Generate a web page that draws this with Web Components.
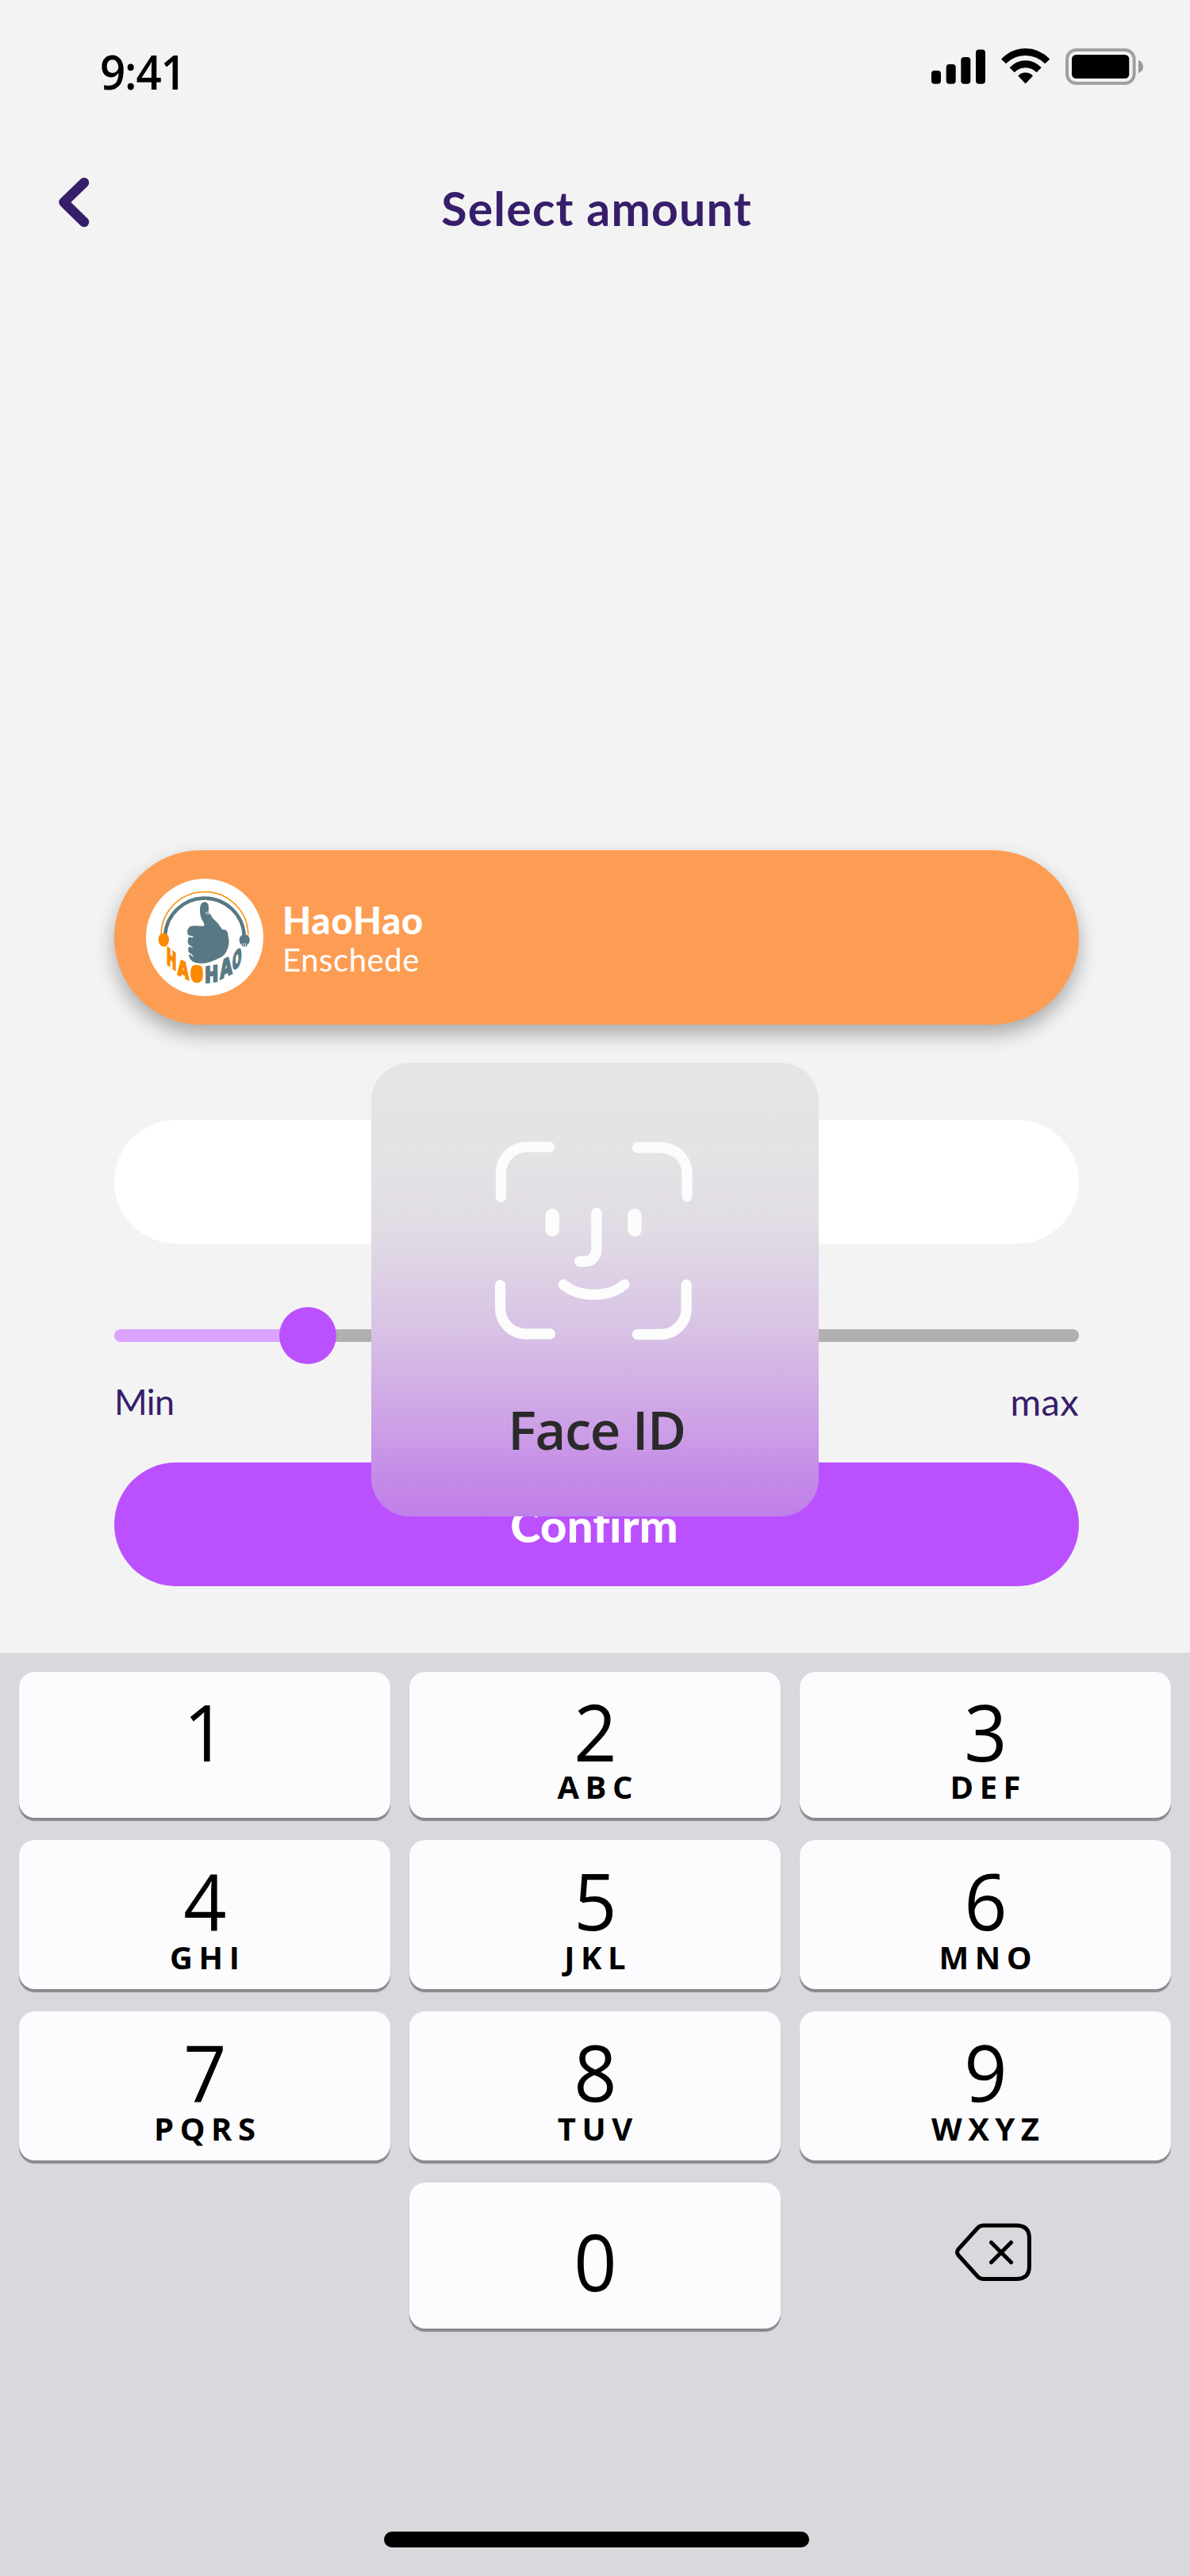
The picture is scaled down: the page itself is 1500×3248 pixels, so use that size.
<!DOCTYPE html>
<html lang="en">
<head>
<meta charset="utf-8">
<title>Select amount</title>
<style>
  html, body { margin: 0; padding: 0; }
  body { width: 1500px; background: #f3f3f3; font-family: "Open Sans", "Noto Sans", sans-serif; color: #000; }
</style>
</head>
<body>
<phone-screen>
  <status-bar time="9:41"></status-bar>
  <nav-header>Select amount</nav-header>
  <amount-form>
    <merchant-card name="HaoHao" place="Enschede"></merchant-card>
    <amount-field></amount-field>
    <range-slider></range-slider>
    <pill-button>Confirm</pill-button>
  </amount-form>
  <number-pad></number-pad>
  <face-id-panel slot="overlay">Face ID</face-id-panel>
</phone-screen>
<script>
const define = (name, html, setup) => customElements.define(name, class extends HTMLElement {
  connectedCallback() {
    if (this.shadowRoot) return;
    const root = this.attachShadow({ mode: "open" });
    const tpl = document.createElement("template");
    tpl.innerHTML = html;
    root.append(tpl.content.cloneNode(true));
    if (setup) setup(this, root);
  }
});

define("phone-screen", `
  <style>
    :host { display: flex; flex-direction: column; position: relative; width: 1500px; height: 3248px; background: #f3f3f3; overflow: hidden; }
  </style>
  <slot></slot><slot name="overlay"></slot>`);

define("status-bar", `
  <style>
    :host { display: flex; justify-content: space-between; align-items: flex-start; height: 180px; box-sizing: border-box; padding: 56px 58px 0 126px; }
    .time { font-size: 60px; font-weight: 600; line-height: 68px; letter-spacing: -1.200px; transform: scaleX(.94); transform-origin: left; }
    svg { display: block; }
  </style>
  <span class="time"></span>
  <svg width="270" height="54" viewBox="1172 56 270 54">
    <rect x="1174" y="89" width="12" height="16.7" rx="4"/>
    <rect x="1192.7" y="81" width="12" height="24.7" rx="4"/>
    <rect x="1211.3" y="72" width="12" height="33.7" rx="4"/>
    <rect x="1230" y="62.5" width="12" height="43.2" rx="4"/>
    <path d="M1262 74.5 Q1275 61 1292.600 61 Q1310 61 1323.300 74.500 L1317.300 80.300 Q1306.500 70 1292.600 70 Q1278.700 70 1268 80.300 Z"/>
    <path d="M1272.600 85.200 Q1281 76.200 1292.600 76.200 Q1304.200 76.200 1312.700 85.200 L1306.600 91.300 Q1300.500 85.300 1292.600 85.300 Q1284.700 85.300 1278.700 91.300 Z"/>
    <path d="M1283.300 95.700 Q1287 91.500 1292.600 91.500 Q1298.200 91.500 1302 95.700 L1292.600 105.400 Z"/>
    <rect x="1345" y="63" width="84.600" height="42" rx="11.500" fill="none" stroke="#a0a0a0" stroke-width="4"/>
    <rect x="1351" y="69" width="72.300" height="30" rx="5.500"/>
    <path d="M1435 75.700 Q1441 78.500 1441 84 Q1441 89.500 1435 92.300 Z" fill="#999"/>
  </svg>`, (el, root) => { root.querySelector(".time").textContent = el.getAttribute("time"); });

define("nav-header", `
  <style>
    :host { display: grid; grid-template-columns: 1fr auto 1fr; align-items: center; height: 150px; box-sizing: border-box; padding: 0 68px 0 72px; color: #371e6b; }
    h1 { margin: 0; padding-top: 16px; font: 700 59px/60px Lato, sans-serif; letter-spacing: 1.2px; }
    svg { display: block; }
  </style>
  <svg width="42" height="64" viewBox="72 223 42 64"><path d="M106 230.200 L80.500 255 L106 280" fill="none" stroke="currentColor" stroke-width="12.500" stroke-linecap="round" stroke-linejoin="round"/></svg>
  <h1><slot></slot></h1>`);

define("amount-form", `
  <style>
    :host { display: flex; flex-direction: column; height: 1754px; box-sizing: border-box; padding: 742px 140px 0 144px; }
  </style><slot></slot>`);

define("hao-logo", `
  <style>:host { display: block; width: 148px; height: 148px; flex: none; } svg { display: block; }</style>
  <svg width="148" height="148" viewBox="42 54 444 444" font-family="Open Sans, sans-serif" font-weight="800" font-size="100">
    <circle cx="264" cy="276" r="222" fill="#fff"/>
    <g fill="none">
      <path d="M99.500 268 A164.500 164.500 0 0 1 428.500 268" stroke="#fb8a00" stroke-width="4.500"/>
      <path d="M114.500 266 A149.800 149.800 0 0 1 413.500 270" stroke="#587983" stroke-width="13.500"/>
    </g>
    <path d="M109 260 C122 260 129 270 129 284 C129 299 119 311 110 311 C99 311 89 299 89 285 C89 270 96 260 109 260Z" fill="#fb8a00"/>
    <path d="M415 265 C428 265 436 277 434 288 C433 300 424 308 421 311 L410 311 C402 308 396 299 395 288 C394 275 403 265 415 265Z" fill="#587983"/>
    <path d="M404 312 L402 300 M411 313 L410 297 M417 313 L419 297 M425 311 L427 300" stroke="#fff" stroke-width="2.500"/>
    <path d="M263 142 C274 141 279 151 279 162 C279 170 278 175 279 181 L287 190 C293 205 305 213 314 223 C321 232 326 240 331 247 C336 244 344 246 349 253 C353 262 352 272 355 281 C358 301 352 320 342 336 C333 350 313 357 297 364 C278 374 252 376 235 373 C218 369 207 359 204 346 C204 341 208 339 211 342 C214 346 218 348 221 350 C220 344 213 338 206 334 C199 327 201 315 207 310 C212 312 215 316 219 315 C217 310 209 307 204 303 C198 296 199 284 205 274 C211 274 216 278 222 276 C222 271 211 271 202 267 C195 258 198 242 209 235 C224 229 243 234 260 233 C267 229 258 216 253 207 C246 193 245 176 247 160 C249 149 255 143 263 142Z" fill="#587983"/>
    <path d="M266 184 L278 179 M270 187 L284 181 M275 189 L288 184 M282 179 L284 188" stroke="#fff" stroke-width="1.800"/>
    <g fill="#fb8a00" stroke="#fb8a00" stroke-width="5">
      <text transform="matrix(.50 .38 0 .93 119 375)">H</text>
      <text transform="matrix(.60 .30 0 .86 161 416)">A</text>
      <text transform="matrix(.56 .04 0 .84 211 443)">O</text>
      <path d="M216 386 C223 378 245 378 253 387 C259 399 259 427 254 437 C247 449 226 449 217 437 C209 426 209 397 216 386Z" stroke="none"/>
    </g>
    <g fill="#587983" stroke="#587983" stroke-width="5">
      <text transform="matrix(.68 -.10 0 .87 264 449)">H</text>
      <text transform="matrix(.64 -.31 0 .96 322 435)">A</text>
      <text transform="matrix(.45 -.44 0 .92 368 408)">O</text>
    </g>
  </svg>`);

define("merchant-card", `
  <style>
    :host { display: flex; align-items: center; gap: 24px; height: 220px; box-sizing: border-box; padding-left: 40px; border-radius: 110px; background: #fd9d53; color: #fff; box-shadow: 0 12px 24px rgba(0,0,0,.3); }
    .text { display: flex; flex-direction: column; padding-top: 6px; font-family: Lato, sans-serif; }
    b { font-size: 47px; font-weight: 900; line-height: 50px; letter-spacing: .8px; }
    span { font-size: 40px; font-weight: 400; line-height: 50px; letter-spacing: .6px; }
  </style>
  <hao-logo></hao-logo>
  <div class="text"><b></b><span></span></div>`, (el, root) => {
    root.querySelector("b").textContent = el.getAttribute("name");
    root.querySelector("span").textContent = el.getAttribute("place");
  });

define("amount-field", `
  <style>:host { display: block; height: 156px; margin-top: 120px; border-radius: 78px; background: #fff; }</style>`);

define("range-slider", `
  <style>
    :host { display: block; height: 151px; margin-top: 80px; color: #371e6b; font: 400 45px/60px Lato, sans-serif; }
    .track { display: flex; align-items: center; height: 72px; }
    .fill { width: 212px; height: 16px; border-radius: 8px 0 0 8px; background: #daa3ff; margin-right: -4px; }
    .thumb { width: 72px; height: 72px; border-radius: 50%; background: #bb51fe; z-index: 1; }
    .rest { flex: 1; height: 16px; border-radius: 0 8px 8px 0; background: #b0b0b0; margin-left: -4px; }
    .labels { display: flex; justify-content: space-between; padding: 17px 0 0 0; }
    .min { letter-spacing: -.6px; }
    .max { font-size: 47px; letter-spacing: .4px; }
  </style>
  <div class="track"><div class="fill"></div><div class="thumb"></div><div class="rest"></div></div>
  <div class="labels"><span class="min">Min</span><span class="max">max</span></div>`);

define("pill-button", `
  <style>
    :host { display: flex; align-items: center; justify-content: center; height: 156px; box-sizing: border-box; padding: 1px 6px 0 0; margin-top: 45px; border-radius: 78px; background: #bb51fe; color: #fff; font: 900 58px/60px Lato, sans-serif; letter-spacing: .2px; }
  </style><span><slot></slot></span>`);

define("pad-key", `
  <style>
    :host { display: flex; flex-direction: column; align-items: center; box-sizing: border-box; padding-top: 26px; border-radius: 20px; background: #fcfcfe; box-shadow: 0 4px 1px #898a8d; }
    :host([row="1"]) { padding-top: 25px; }
    :host([row="4"]) { padding-top: 49px; }
    .digit { font-size: 99px; line-height: 100px; transform: scaleX(.96); }
    .letters { margin-top: 1.500px; padding-left: 7.500px; font-size: 40px; font-weight: 700; line-height: 40px; letter-spacing: 7.500px; }
    :host([row="1"]) .letters { margin-top: 0; }
  </style>
  <span class="digit"></span><span class="letters"><slot></slot></span>`,
  (el, root) => { root.querySelector(".digit").textContent = el.getAttribute("digit"); });

define("number-pad", `
  <style>
    :host { display: flex; flex-direction: column; justify-content: space-between; align-items: center; height: 1164px; box-sizing: border-box; padding: 24px 24px 36px; background: #d8d9dd; }
    .keys { display: grid; grid-template-columns: repeat(3, 468px); grid-template-rows: 184px 188px 188px 184px; gap: 28px 24px; }
    .delete { grid-column: 3; display: flex; align-items: center; justify-content: center; padding-left: 20px; padding-bottom: 9px; }
    .zero { grid-column: 2; }
    .home { width: 536px; height: 20px; border-radius: 10px; background: #000; margin-left: 4px; }
  </style>
  <div class="keys">
    <pad-key row="1" digit="1"></pad-key><pad-key row="1" digit="2">ABC</pad-key><pad-key row="1" digit="3">DEF</pad-key>
    <pad-key row="2" digit="4">GHI</pad-key><pad-key row="2" digit="5">JKL</pad-key><pad-key row="2" digit="6">MNO</pad-key>
    <pad-key row="3" digit="7">PQRS</pad-key><pad-key row="3" digit="8">TUV</pad-key><pad-key row="3" digit="9">WXYZ</pad-key>
    <pad-key class="zero" row="4" digit="0"></pad-key>
    <div class="delete">
      <svg width="104" height="80" viewBox="0 0 104 80" fill="none" stroke="#000" stroke-width="5" stroke-linecap="round" stroke-linejoin="round">
        <path d="M40 6 H81 Q97.400 6 97.400 22 V57.500 Q97.400 73.500 81 73.500 H40 Q35.500 73.500 32.500 70.500 L8 43.500 Q5 39.800 8 36 L32.500 9 Q35.500 6 40 6Z"/>
        <path d="M49.500 27.500 L74.500 52.500 M74.500 27.500 L49.500 52.500"/>
      </svg>
    </div>
  </div>
  <div class="home"></div>`);

define("face-id-panel", `
  <style>
    :host { position: absolute; left: 468px; top: 1340px; z-index: 2; width: 564px; height: 572px; display: flex; flex-direction: column; align-items: center; border-radius: 48px; color: #2a2a2a;
      background: linear-gradient(#e5e5e4 0%, #e4e3e5 20%, #e1dce5 36%, #ddd0e4 47%, #d8c2e5 59%, #d2b0e6 70%, #cb9de7 82%, #c58de8 90%, #c283e8 96.500%, #be80ea 100%); }
    svg { display: block; margin: 96px 4px 0 0; }
    span { margin-top: 68px; padding-left: 4px; font-size: 67px; font-weight: 600; line-height: 80px; letter-spacing: -1.400px; }
  </style>
  <svg width="256" height="258" viewBox="620 1436 256 258" fill="none" stroke="#fcfcfc" stroke-width="13.300" stroke-linecap="round">
    <path d="M692.500 1446.200 H664 A32.500 32.500 0 0 0 631.500 1478.700 V1509"/>
    <path d="M803.500 1447 H833.500 A32.500 32.500 0 0 1 866 1479.500 V1508.500"/>
    <path d="M630.600 1620.500 V1649.500 A32.500 32.500 0 0 0 663 1682 H693.500"/>
    <path d="M865.200 1620 V1650 A32.500 32.500 0 0 1 832.700 1682.500 H803.500"/>
    <path d="M751.900 1529.500 V1576 A14.500 14.500 0 0 1 737.500 1590.500 H730.500"/>
    <path d="M710.300 1619.700 C730 1636.500 767.500 1636.500 787 1619.700"/>
    <rect x="687.500" y="1524" width="17.500" height="35" rx="8.700" fill="#fcfcfc" stroke="none"/>
    <rect x="791.200" y="1524" width="17.500" height="35" rx="8.700" fill="#fcfcfc" stroke="none"/>
  </svg>
  <span><slot></slot></span>`);
</script>
</body>
</html>
